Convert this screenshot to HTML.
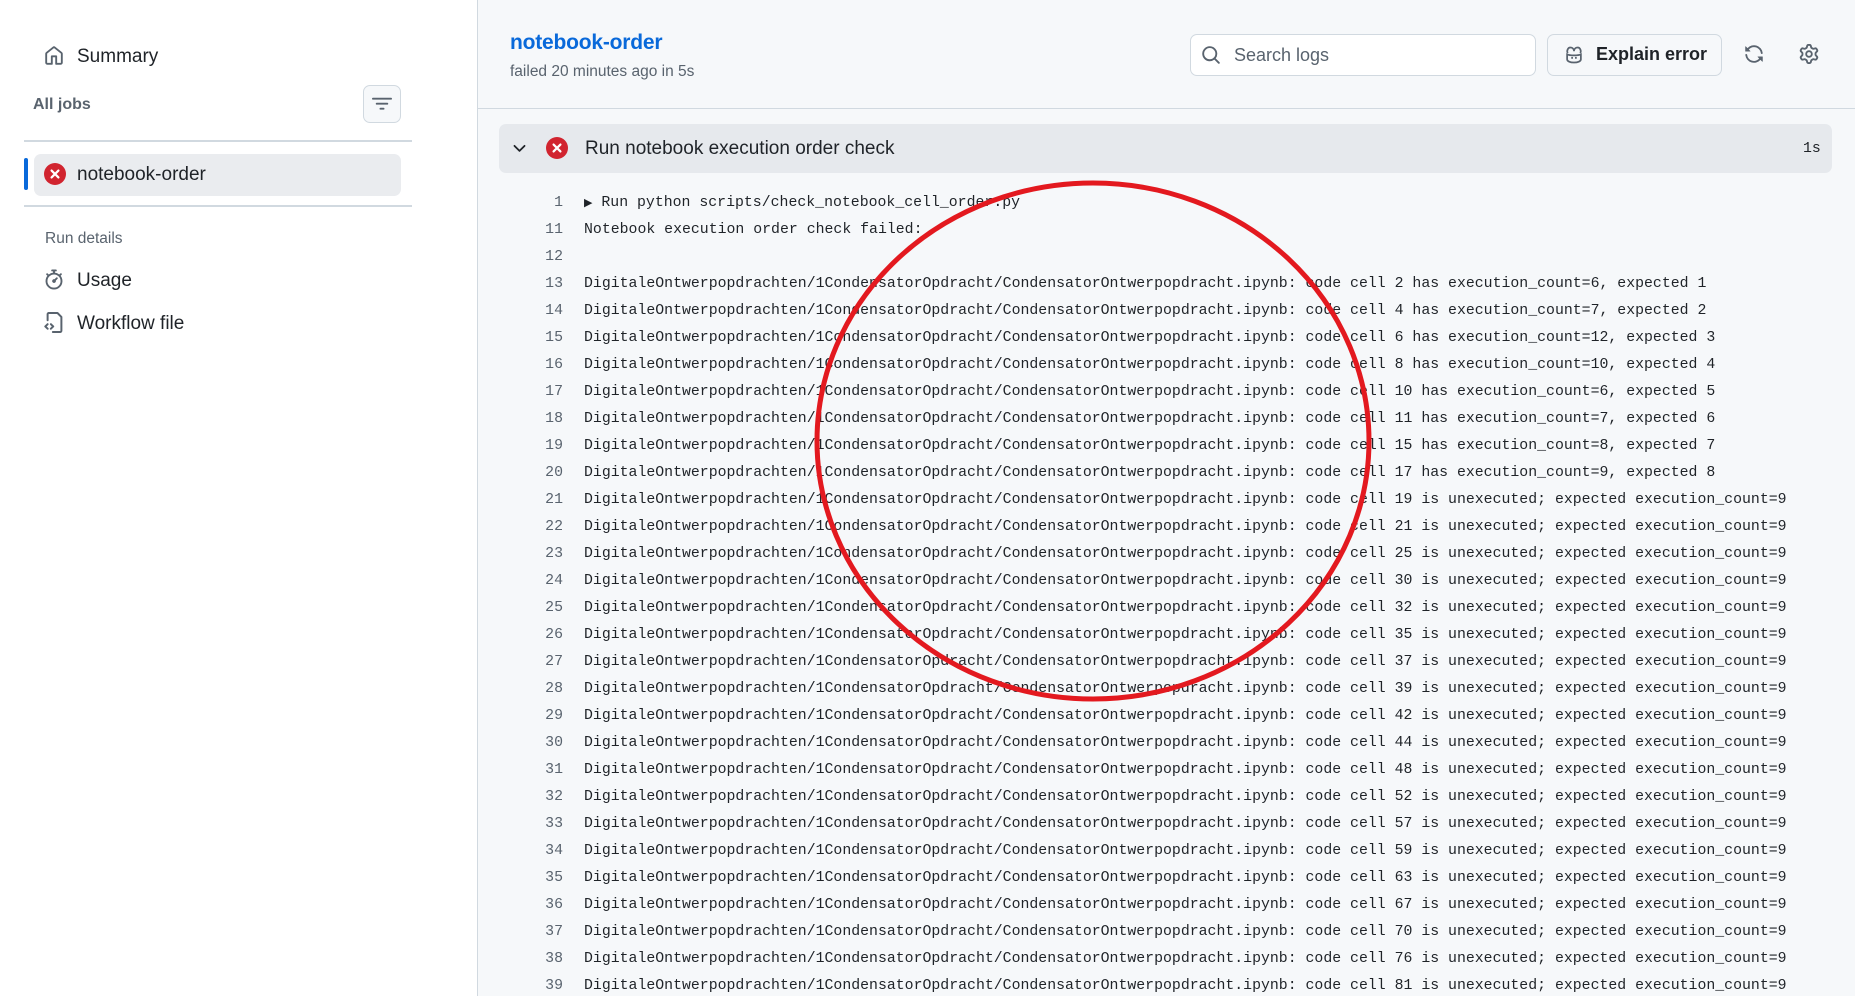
<!DOCTYPE html>
<html><head><meta charset="utf-8"><style>
*{margin:0;padding:0;box-sizing:border-box}
body{width:1855px;height:996px;overflow:hidden;background:#fff;font-family:"Liberation Sans",sans-serif;color:#1f2328;position:relative}
.a{position:absolute}
#main{left:477px;top:0;width:1378px;height:996px;background:#f6f8fa;border-left:1px solid #d1d9e0}
.side{font-size:19px;color:#1f2328}
.log{position:absolute;left:0;width:1855px;height:27px;font-family:"Liberation Mono",monospace;font-size:14.85px;line-height:27px;white-space:pre;color:#1f2328}
.log .n{position:absolute;right:1292px;color:#59636e;text-align:right}
.log .t{position:absolute;left:584px}
</style></head><body>
<svg class="a" style="left:44px;top:46px" width="20" height="20" viewBox="0 0 16 16" fill="#59636e"><path d="M6.906.664a1.749 1.749 0 0 1 2.187 0l5.250 4.2c.415.332.657.835.657 1.367v7.019A1.75 1.75 0 0 1 13.25 15h-3.5a.75.75 0 0 1-.75-.75V9H7v5.25a.75.75 0 0 1-.75.75h-3.5A1.75 1.75 0 0 1 1 13.25V6.23c0-.531.242-1.034.657-1.366l5.25-4.2Zm1.25 1.171a.25.25 0 0 0-.312 0l-5.25 4.2a.25.25 0 0 0-.094.196v7.019c0 .138.112.25.25.25H5.5V8.25a.75.75 0 0 1 .75-.75h3.5a.75.75 0 0 1 .75.75v5.25h2.75a.25.25 0 0 0 .25-.25V6.23a.25.25 0 0 0-.094-.195Z"/></svg>
<div class="a side" style="left:77px;top:46px">Summary</div>
<div class="a" style="left:33px;top:96px;font-size:16px;color:#59636e;font-weight:bold">All jobs</div>
<div class="a" style="left:363px;top:85px;width:38px;height:38px;border:1px solid #d1d9e0;border-radius:7px;background:#f6f8fa"></div>
<svg class="a" style="left:372px;top:94px" width="20" height="20" viewBox="0 0 16 16" fill="#59636e"><path d="M.75 3h14.5a.75.75 0 0 1 0 1.5H.75a.75.75 0 0 1 0-1.5ZM3 7.75A.75.75 0 0 1 3.75 7h8.5a.75.75 0 0 1 0 1.5h-8.5A.75.75 0 0 1 3 7.75Zm3 4a.75.75 0 0 1 .75-.75h2.5a.75.75 0 0 1 0 1.5h-2.5a.75.75 0 0 1-.75-.75Z"/></svg>
<div class="a" style="left:24px;top:140px;width:388px;height:2px;background:#d1d9e0"></div>
<div class="a" style="left:24px;top:158px;width:4px;height:32px;border-radius:2px;background:#0969da"></div>
<div class="a" style="left:34px;top:154px;width:367px;height:42px;border-radius:7px;background:#eaecef"></div>
<svg class="a" style="left:44px;top:163px" width="22" height="22" viewBox="0 0 16 16"><circle cx="8" cy="8" r="8" fill="#d1242f"/><path d="M5.5 5.5l5 5M10.5 5.5l-5 5" stroke="#fff" stroke-width="1.6" stroke-linecap="round"/></svg>
<div class="a side" style="left:77px;top:164px">notebook-order</div>
<div class="a" style="left:24px;top:205px;width:388px;height:2px;background:#d1d9e0"></div>
<div class="a" style="left:45px;top:230px;font-size:15.5px;color:#59636e">Run details</div>
<svg class="a" style="left:44px;top:269px" width="20" height="21" viewBox="0 0 16 16" fill="#59636e"><path d="M5.75.75A.75.75 0 0 1 6.5 0h3a.75.75 0 0 1 0 1.5h-.75v1l-.001.041a6.724 6.724 0 0 1 3.464 1.435l.007-.006.75-.75a.749.749 0 0 1 1.275.326.749.749 0 0 1-.215.734l-.75.75-.006.007a6.75 6.75 0 1 1-10.548 0L2.72 5.030l-.75-.75a.751.751 0 0 1 .018-1.042.751.751 0 0 1 1.042-.018l.75.75.007.006A6.72 6.72 0 0 1 7.25 2.541V1.5H6.5a.75.75 0 0 1-.75-.75ZM8 14.5A5.25 5.25 0 1 0 8 4a5.25 5.25 0 0 0 0 10.5Zm.389-6.7 1.33-1.33a.75.75 0 1 1 1.061 1.06L9.45 8.861A1.503 1.503 0 0 1 8 10.75a1.499 1.499 0 1 1 .389-2.95Z"/></svg>
<div class="a side" style="left:77px;top:270px">Usage</div>
<svg class="a" style="left:44px;top:312px" width="21" height="21" viewBox="0 0 16 16" fill="#59636e"><path d="M3.75 0h6.5c.2 0 .39.08.53.22l3 3c.14.14.22.33.22.53v10.5A1.75 1.75 0 0 1 12.25 16h-5.5a.75.75 0 0 1 0-1.5h5.5a.25.25 0 0 0 .25-.25V4.060L9.940 1.5H3.750a.25.25 0 0 0-.25.25v4.5a.75.75 0 0 1-1.5 0v-4.5C2 .78 2.78 0 3.75 0ZM4.72 8.72a.75.75 0 0 1 1.060 0l1.75 1.75a.75.75 0 0 1 0 1.060l-1.75 1.75a.75.75 0 1 1-1.060-1.060L5.94 11l-1.22-1.22a.75.75 0 0 1 0-1.060Zm-1.440 0a.75.75 0 0 1 0 1.060L2.06 11l1.22 1.22a.75.75 0 1 1-1.060 1.060L.47 11.530a.75.75 0 0 1 0-1.060l1.75-1.75a.75.75 0 0 1 1.060 0Z"/></svg>
<div class="a side" style="left:77px;top:313px">Workflow file</div>
<div id="main" class="a"></div>
<div class="a" style="left:510px;top:31px;font-size:21px;color:#0969da;font-weight:bold;letter-spacing:-0.2px">notebook-order</div>
<div class="a" style="left:510px;top:63px;font-size:15.5px;color:#59636e">failed 20 minutes ago in 5s</div>
<div class="a" style="left:1190px;top:34px;width:346px;height:42px;border:1px solid #d1d9e0;border-radius:7px;background:#fff"></div>
<svg class="a" style="left:1201px;top:45px" width="20" height="20" viewBox="0 0 16 16" fill="#59636e"><path d="M10.68 11.74a6 6 0 0 1-7.922-8.982 6 6 0 0 1 8.982 7.922l3.04 3.04a.749.749 0 0 1-.326 1.275.749.749 0 0 1-.734-.215ZM11.5 7a4.499 4.499 0 1 0-8.997 0A4.499 4.499 0 0 0 11.5 7Z"/></svg>
<div class="a" style="left:1234px;top:45px;font-size:18px;color:#59636e">Search logs</div>
<div class="a" style="left:1547px;top:34px;width:175px;height:42px;border:1px solid #d1d9e0;border-radius:7px;background:#f6f8fa"></div>
<svg class="a" style="left:1564px;top:45px" width="20" height="20" viewBox="0 0 16 16" fill="none" stroke="#59636e" stroke-width="1.4"><path d="M3 6.5C2 5 3 2 5 2s3 1.5 3 3c0-1.5 1-3 3-3s3 3 2 4.5"/><path d="M2.5 7.5v4c0 1.5 2.5 2.5 5.5 2.5s5.5-1 5.5-2.5v-4c-1 .5-3 .8-5.5.8s-4.5-.3-5.5-.8z"/><path d="M6.5 9.5v1.5M9.5 9.5v1.5"/></svg>
<div class="a" style="left:1596px;top:44px;font-size:18px;font-weight:bold;color:#1f2328">Explain error</div>
<svg class="a" style="left:1744px;top:44px" width="20" height="20" viewBox="0 0 16 16" fill="#59636e"><path d="M1.705 8.005a.75.75 0 0 1 .834.656 5.5 5.5 0 0 0 9.592 2.97l-1.204-1.204a.25.25 0 0 1 .177-.427h3.646a.25.25 0 0 1 .25.25v3.646a.25.25 0 0 1-.427.177l-1.38-1.38A7.002 7.002 0 0 1 1.05 8.84a.75.75 0 0 1 .656-.834ZM8 2.5a5.487 5.487 0 0 0-4.131 1.869l1.204 1.204A.25.25 0 0 1 4.896 6H1.25A.25.25 0 0 1 1 5.75V2.104a.25.25 0 0 1 .427-.177l1.38 1.38A7.002 7.002 0 0 1 14.95 7.16a.75.75 0 0 1-1.49.178A5.5 5.5 0 0 0 8 2.5Z"/></svg>
<svg class="a" style="left:1799px;top:44px" width="20" height="20" viewBox="0 0 16 16" fill="#59636e"><path d="M8 0a8.2 8.2 0 0 1 .701.031C9.444.095 9.99.645 10.16 1.29l.288 1.107c.018.066.079.158.212.224.231.114.454.243.668.386.123.082.233.09.299.071l1.103-.303c.644-.176 1.392.021 1.820.63.27.385.506.792.704 1.218.315.675.111 1.422-.364 1.891l-.814.806c-.049.048-.098.147-.088.294.016.257.016.515 0 .772-.01.147.038.246.088.294l.814.806c.475.469.679 1.216.364 1.891a7.977 7.977 0 0 1-.704 1.217c-.428.61-1.176.807-1.820.63l-1.102-.302c-.067-.019-.177-.011-.3.071a5.909 5.909 0 0 1-.668.386c-.133.066-.194.158-.211.224l-.29 1.106c-.168.646-.715 1.196-1.458 1.26a8.006 8.006 0 0 1-1.402 0c-.743-.064-1.289-.614-1.458-1.26l-.289-1.106c-.018-.066-.079-.158-.212-.224a5.738 5.738 0 0 1-.668-.386c-.123-.082-.233-.09-.299-.071l-1.103.303c-.644.176-1.392-.021-1.820-.63a8.12 8.12 0 0 1-.704-1.218c-.315-.675-.111-1.422.363-1.891l.815-.806c.05-.048.098-.147.088-.294a6.214 6.214 0 0 1 0-.772c.01-.147-.038-.246-.088-.294l-.815-.806C.635 6.045.431 5.298.746 4.623a7.92 7.92 0 0 1 .704-1.217c.428-.61 1.176-.807 1.820-.63l1.102.302c.067.019.177.011.3-.071.214-.143.437-.272.668-.386.133-.066.194-.158.211-.224l.29-1.106C6.009.645 6.556.095 7.299.03 7.53.01 7.764 0 8 0Zm-.571 1.525c-.036.003-.108.036-.137.146l-.289 1.105c-.147.561-.549.967-.998 1.189-.173.086-.34.183-.5.29-.417.278-.97.423-1.529.27l-1.103-.303c-.109-.03-.175.016-.195.045-.22.312-.412.644-.573.99-.014.031-.021.11.059.19l.815.806c.411.406.562.957.53 1.456a4.709 4.709 0 0 0 0 .582c.032.499-.119 1.05-.53 1.456l-.815.806c-.081.08-.073.159-.059.19.162.346.353.677.573.989.02.03.085.076.195.046l1.102-.303c.56-.153 1.113-.008 1.53.27.161.107.328.204.501.29.447.222.85.629.997 1.189l.289 1.105c.029.109.101.143.137.146a6.6 6.6 0 0 0 1.142 0c.036-.003.108-.036.137-.146l.289-1.105c.147-.561.549-.967.998-1.189.173-.086.34-.183.5-.29.417-.278.97-.423 1.529-.27l1.103.303c.109.029.175-.016.195-.045.22-.313.411-.644.573-.99.014-.031.021-.11-.059-.19l-.815-.806c-.411-.406-.562-.957-.53-1.456a4.709 4.709 0 0 0 0-.582c-.032-.499.119-1.05.53-1.456l.815-.806c.081-.08.073-.159.059-.19a6.464 6.464 0 0 0-.573-.989c-.02-.03-.085-.076-.195-.046l-1.102.303c-.56.153-1.113.008-1.53-.27a4.44 4.44 0 0 0-.501-.29c-.447-.222-.85-.629-.997-1.189l-.289-1.105c-.029-.11-.101-.143-.137-.146a6.6 6.6 0 0 0-1.142 0ZM11 8a3 3 0 1 1-6 0 3 3 0 0 1 6 0ZM9.5 8a1.5 1.5 0 1 0-3.001.001A1.5 1.5 0 0 0 9.5 8Z"/></svg>
<div class="a" style="left:478px;top:108px;width:1377px;height:1px;background:#d1d9e0"></div>
<div class="a" style="left:499px;top:124px;width:1333px;height:49px;border-radius:7px;background:#e6e9ed"></div>
<svg class="a" style="left:510px;top:139px" width="19" height="19" viewBox="0 0 16 16" fill="#1f2328"><path d="M12.78 5.22a.749.749 0 0 1 0 1.06l-4.25 4.25a.749.749 0 0 1-1.06 0L3.22 6.28a.749.749 0 1 1 1.06-1.06L8 8.939l3.72-3.719a.749.749 0 0 1 1.06 0Z"/></svg>
<svg class="a" style="left:546px;top:137px" width="22" height="22" viewBox="0 0 16 16"><circle cx="8" cy="8" r="8" fill="#d1242f"/><path d="M5.5 5.5l5 5M10.5 5.5l-5 5" stroke="#fff" stroke-width="1.6" stroke-linecap="round"/></svg>
<div class="a" style="left:585px;top:138px;font-size:19px;color:#1f2328">Run notebook execution order check</div>
<div class="a" style="left:1803px;top:141px;font-family:'Liberation Mono',monospace;font-size:14.85px;color:#1f2328">1s</div>

<div class="log" style="top:190px"><span class="n">1</span><span class="t"><span style="font-size:11px">▶</span> Run python scripts/check_notebook_cell_order.py</span></div>
<div class="log" style="top:217px"><span class="n">11</span><span class="t">Notebook execution order check failed:</span></div>
<div class="log" style="top:244px"><span class="n">12</span><span class="t"></span></div>
<div class="log" style="top:271px"><span class="n">13</span><span class="t">DigitaleOntwerpopdrachten/1CondensatorOpdracht/CondensatorOntwerpopdracht.ipynb: code cell 2 has execution_count=6, expected 1</span></div>
<div class="log" style="top:298px"><span class="n">14</span><span class="t">DigitaleOntwerpopdrachten/1CondensatorOpdracht/CondensatorOntwerpopdracht.ipynb: code cell 4 has execution_count=7, expected 2</span></div>
<div class="log" style="top:325px"><span class="n">15</span><span class="t">DigitaleOntwerpopdrachten/1CondensatorOpdracht/CondensatorOntwerpopdracht.ipynb: code cell 6 has execution_count=12, expected 3</span></div>
<div class="log" style="top:352px"><span class="n">16</span><span class="t">DigitaleOntwerpopdrachten/1CondensatorOpdracht/CondensatorOntwerpopdracht.ipynb: code cell 8 has execution_count=10, expected 4</span></div>
<div class="log" style="top:379px"><span class="n">17</span><span class="t">DigitaleOntwerpopdrachten/1CondensatorOpdracht/CondensatorOntwerpopdracht.ipynb: code cell 10 has execution_count=6, expected 5</span></div>
<div class="log" style="top:406px"><span class="n">18</span><span class="t">DigitaleOntwerpopdrachten/1CondensatorOpdracht/CondensatorOntwerpopdracht.ipynb: code cell 11 has execution_count=7, expected 6</span></div>
<div class="log" style="top:433px"><span class="n">19</span><span class="t">DigitaleOntwerpopdrachten/1CondensatorOpdracht/CondensatorOntwerpopdracht.ipynb: code cell 15 has execution_count=8, expected 7</span></div>
<div class="log" style="top:460px"><span class="n">20</span><span class="t">DigitaleOntwerpopdrachten/1CondensatorOpdracht/CondensatorOntwerpopdracht.ipynb: code cell 17 has execution_count=9, expected 8</span></div>
<div class="log" style="top:487px"><span class="n">21</span><span class="t">DigitaleOntwerpopdrachten/1CondensatorOpdracht/CondensatorOntwerpopdracht.ipynb: code cell 19 is unexecuted; expected execution_count=9</span></div>
<div class="log" style="top:514px"><span class="n">22</span><span class="t">DigitaleOntwerpopdrachten/1CondensatorOpdracht/CondensatorOntwerpopdracht.ipynb: code cell 21 is unexecuted; expected execution_count=9</span></div>
<div class="log" style="top:541px"><span class="n">23</span><span class="t">DigitaleOntwerpopdrachten/1CondensatorOpdracht/CondensatorOntwerpopdracht.ipynb: code cell 25 is unexecuted; expected execution_count=9</span></div>
<div class="log" style="top:568px"><span class="n">24</span><span class="t">DigitaleOntwerpopdrachten/1CondensatorOpdracht/CondensatorOntwerpopdracht.ipynb: code cell 30 is unexecuted; expected execution_count=9</span></div>
<div class="log" style="top:595px"><span class="n">25</span><span class="t">DigitaleOntwerpopdrachten/1CondensatorOpdracht/CondensatorOntwerpopdracht.ipynb: code cell 32 is unexecuted; expected execution_count=9</span></div>
<div class="log" style="top:622px"><span class="n">26</span><span class="t">DigitaleOntwerpopdrachten/1CondensatorOpdracht/CondensatorOntwerpopdracht.ipynb: code cell 35 is unexecuted; expected execution_count=9</span></div>
<div class="log" style="top:649px"><span class="n">27</span><span class="t">DigitaleOntwerpopdrachten/1CondensatorOpdracht/CondensatorOntwerpopdracht.ipynb: code cell 37 is unexecuted; expected execution_count=9</span></div>
<div class="log" style="top:676px"><span class="n">28</span><span class="t">DigitaleOntwerpopdrachten/1CondensatorOpdracht/CondensatorOntwerpopdracht.ipynb: code cell 39 is unexecuted; expected execution_count=9</span></div>
<div class="log" style="top:703px"><span class="n">29</span><span class="t">DigitaleOntwerpopdrachten/1CondensatorOpdracht/CondensatorOntwerpopdracht.ipynb: code cell 42 is unexecuted; expected execution_count=9</span></div>
<div class="log" style="top:730px"><span class="n">30</span><span class="t">DigitaleOntwerpopdrachten/1CondensatorOpdracht/CondensatorOntwerpopdracht.ipynb: code cell 44 is unexecuted; expected execution_count=9</span></div>
<div class="log" style="top:757px"><span class="n">31</span><span class="t">DigitaleOntwerpopdrachten/1CondensatorOpdracht/CondensatorOntwerpopdracht.ipynb: code cell 48 is unexecuted; expected execution_count=9</span></div>
<div class="log" style="top:784px"><span class="n">32</span><span class="t">DigitaleOntwerpopdrachten/1CondensatorOpdracht/CondensatorOntwerpopdracht.ipynb: code cell 52 is unexecuted; expected execution_count=9</span></div>
<div class="log" style="top:811px"><span class="n">33</span><span class="t">DigitaleOntwerpopdrachten/1CondensatorOpdracht/CondensatorOntwerpopdracht.ipynb: code cell 57 is unexecuted; expected execution_count=9</span></div>
<div class="log" style="top:838px"><span class="n">34</span><span class="t">DigitaleOntwerpopdrachten/1CondensatorOpdracht/CondensatorOntwerpopdracht.ipynb: code cell 59 is unexecuted; expected execution_count=9</span></div>
<div class="log" style="top:865px"><span class="n">35</span><span class="t">DigitaleOntwerpopdrachten/1CondensatorOpdracht/CondensatorOntwerpopdracht.ipynb: code cell 63 is unexecuted; expected execution_count=9</span></div>
<div class="log" style="top:892px"><span class="n">36</span><span class="t">DigitaleOntwerpopdrachten/1CondensatorOpdracht/CondensatorOntwerpopdracht.ipynb: code cell 67 is unexecuted; expected execution_count=9</span></div>
<div class="log" style="top:919px"><span class="n">37</span><span class="t">DigitaleOntwerpopdrachten/1CondensatorOpdracht/CondensatorOntwerpopdracht.ipynb: code cell 70 is unexecuted; expected execution_count=9</span></div>
<div class="log" style="top:946px"><span class="n">38</span><span class="t">DigitaleOntwerpopdrachten/1CondensatorOpdracht/CondensatorOntwerpopdracht.ipynb: code cell 76 is unexecuted; expected execution_count=9</span></div>
<div class="log" style="top:973px"><span class="n">39</span><span class="t">DigitaleOntwerpopdrachten/1CondensatorOpdracht/CondensatorOntwerpopdracht.ipynb: code cell 81 is unexecuted; expected execution_count=9</span></div>

<svg class="a" style="left:0;top:0" width="1855" height="996"><ellipse cx="1093" cy="441" rx="276" ry="258" fill="none" stroke="#e3191f" stroke-width="5"/></svg>
</body></html>
